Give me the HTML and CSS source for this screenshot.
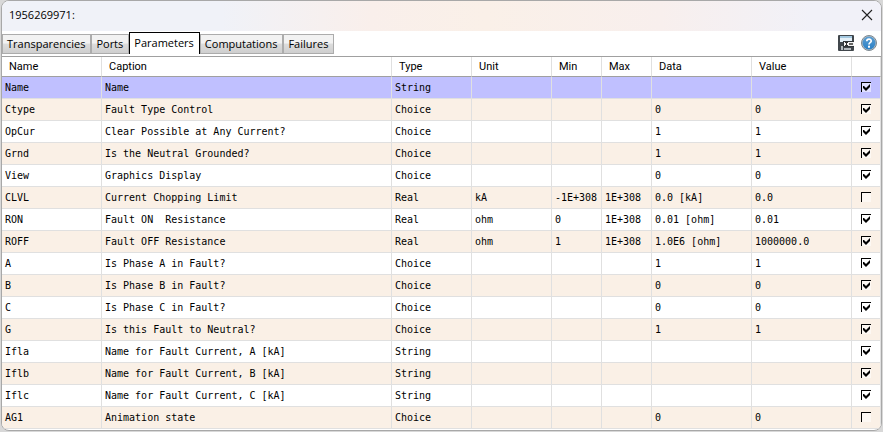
FILE: index.html
```html
<!DOCTYPE html>
<html lang="en">
<head>
<meta charset="utf-8">
<title>1956269971:</title>
<link rel="stylesheet" href="styles.css">
</head>
<body>
<main class="window">
  <header class="titlebar">
    <h1 class="title">1956269971:</h1>
    <button class="close" type="button" aria-label="Close">
      <svg width="12" height="12" viewBox="0 0 12 12"><path d="M1 1l10 10M11 1L1 11" stroke="#222" stroke-width="1.1" fill="none"/></svg>
    </button>
  </header>
  <nav class="toolbar">
    <div class="tabs" role="tablist">
      <button class="tab" type="button" role="tab">Transparencies</button>
      <button class="tab" type="button" role="tab">Ports</button>
      <button class="tab active" type="button" role="tab" aria-selected="true">Parameters</button>
      <button class="tab" type="button" role="tab">Computations</button>
      <button class="tab" type="button" role="tab">Failures</button>
    </div>
    <div class="tools">
      <button class="tool" type="button" aria-label="Save">
        <svg width="16" height="16" viewBox="0 0 16 16">
          <rect width="16" height="16" rx="1" fill="#41474c"/>
          <rect x="2" y="1" width="12" height="6" fill="#e4f0f8"/>
          <rect x="2" y="1" width="12" height="2" fill="#a3c8e0"/>
          <rect x="3" y="11" width="2" height="4" fill="#b4babe"/>
          <rect x="5" y="6" width="11" height="6" fill="#30363a"/>
          <rect x="6" y="7" width="10" height="4" fill="#f4f4f4"/>
          <path d="M7 7.500h3M8.500 8v2M7 10.500h3" stroke="#333" fill="none"/>
          <rect x="11" y="8" width="4" height="2" fill="#666"/>
          <rect x="6" y="13" width="7" height="2" fill="#b4babe"/>
        </svg>
      </button>
      <button class="tool" type="button" aria-label="Help">
        <svg width="16" height="16" viewBox="0 0 16 16">
          <defs><linearGradient id="g" x2="0" y2="1"><stop offset="0" stop-color="#5c9ed2"/><stop offset="1" stop-color="#2b80c6"/></linearGradient></defs>
          <circle cx="8" cy="8" r="7.500" fill="#b8c0c6" stroke="#7d8890"/>
          <circle cx="8" cy="8" r="6.500" fill="url(#g)"/>
          <path d="M5.800 6.300C5.800 3.400 10.300 3.500 10.200 6.200C10.100 7.700 8 7.700 8 9.500" stroke="#fff" stroke-width="1.700" fill="none"/>
          <rect x="7" y="10.700" width="2" height="2" fill="#fff"/>
        </svg>
      </button>
    </div>
  </nav>
  <table class="grid">
    <colgroup><col class="w100"><col><col class="w80"><col class="w80"><col class="w50"><col class="w50"><col class="w100"><col class="w100"><col class="w29"></colgroup>
    <thead><tr><th>Name</th><th>Caption</th><th>Type</th><th>Unit</th><th>Min</th><th>Max</th><th>Data</th><th>Value</th><th></th></tr></thead>
    <tbody>
      <tr class="selected"><td>Name</td><td>Name</td><td>String</td><td></td><td></td><td></td><td></td><td></td><td><input type="checkbox" aria-label="Name" checked></td></tr>
      <tr><td>Ctype</td><td>Fault Type Control</td><td>Choice</td><td></td><td></td><td></td><td>0</td><td>0</td><td><input type="checkbox" aria-label="Ctype" checked></td></tr>
      <tr><td>OpCur</td><td>Clear Possible at Any Current?</td><td>Choice</td><td></td><td></td><td></td><td>1</td><td>1</td><td><input type="checkbox" aria-label="OpCur" checked></td></tr>
      <tr><td>Grnd</td><td>Is the Neutral Grounded?</td><td>Choice</td><td></td><td></td><td></td><td>1</td><td>1</td><td><input type="checkbox" aria-label="Grnd" checked></td></tr>
      <tr><td>View</td><td>Graphics Display</td><td>Choice</td><td></td><td></td><td></td><td>0</td><td>0</td><td><input type="checkbox" aria-label="View" checked></td></tr>
      <tr><td>CLVL</td><td>Current Chopping Limit</td><td>Real</td><td>kA</td><td>-1E+308</td><td>1E+308</td><td>0.0 [kA]</td><td>0.0</td><td><input type="checkbox" aria-label="CLVL"></td></tr>
      <tr><td>RON</td><td>Fault ON  Resistance</td><td>Real</td><td>ohm</td><td>0</td><td>1E+308</td><td>0.01 [ohm]</td><td>0.01</td><td><input type="checkbox" aria-label="RON" checked></td></tr>
      <tr><td>ROFF</td><td>Fault OFF Resistance</td><td>Real</td><td>ohm</td><td>1</td><td>1E+308</td><td>1.0E6 [ohm]</td><td>1000000.0</td><td><input type="checkbox" aria-label="ROFF" checked></td></tr>
      <tr><td>A</td><td>Is Phase A in Fault?</td><td>Choice</td><td></td><td></td><td></td><td>1</td><td>1</td><td><input type="checkbox" aria-label="A" checked></td></tr>
      <tr><td>B</td><td>Is Phase B in Fault?</td><td>Choice</td><td></td><td></td><td></td><td>0</td><td>0</td><td><input type="checkbox" aria-label="B" checked></td></tr>
      <tr><td>C</td><td>Is Phase C in Fault?</td><td>Choice</td><td></td><td></td><td></td><td>0</td><td>0</td><td><input type="checkbox" aria-label="C" checked></td></tr>
      <tr><td>G</td><td>Is this Fault to Neutral?</td><td>Choice</td><td></td><td></td><td></td><td>1</td><td>1</td><td><input type="checkbox" aria-label="G" checked></td></tr>
      <tr><td>Ifla</td><td>Name for Fault Current, A [kA]</td><td>String</td><td></td><td></td><td></td><td></td><td></td><td><input type="checkbox" aria-label="Ifla" checked></td></tr>
      <tr><td>Iflb</td><td>Name for Fault Current, B [kA]</td><td>String</td><td></td><td></td><td></td><td></td><td></td><td><input type="checkbox" aria-label="Iflb" checked></td></tr>
      <tr><td>Iflc</td><td>Name for Fault Current, C [kA]</td><td>String</td><td></td><td></td><td></td><td></td><td></td><td><input type="checkbox" aria-label="Iflc" checked></td></tr>
      <tr><td>AG1</td><td>Animation state</td><td>Choice</td><td></td><td></td><td></td><td>0</td><td>0</td><td><input type="checkbox" aria-label="AG1"></td></tr>
    </tbody>
  </table>
</main>
</body>
</html>
```
FILE: styles.css
```css
* { box-sizing: border-box; }
body {
  margin: 0;
  padding: 0 1px;
  background: #d8d8d8;
  color: #000;
  font: 11px/16px "Open Sans", "Noto Sans", sans-serif;
}
button { font: inherit; color: inherit; border: 0; background: none; padding: 0; }
svg { display: block; }
.window {
  border: 1px solid #a8a8a8;
  border-radius: 8px;
  background: #fff;
  overflow: hidden;
  padding-bottom: 1px;
}
.titlebar {
  display: flex;
  align-items: center;
  justify-content: space-between;
  height: 30px;
  padding: 0 8px 2px 7px;
  background: linear-gradient(90deg, #f0f2f8 25%, #f9efeb 42%, #faf0e8 55%, #f8efed 75%, #f1f1f8 92%);
}
.title { margin: 0; font-size: 11px; font-weight: 400; }
.toolbar {
  display: flex;
  justify-content: space-between;
  align-items: flex-end;
  height: 25px;
  padding: 0 4px 2px 0;
}
.tabs { display: flex; align-items: flex-end; }
.tab {
  height: 20px;
  padding: 0 5px 0 4px;
  border: 1px solid #acacac;
  background: linear-gradient(#f2f2f2 0 45%, #dcdcdc 50%, #cfcfcf);
}
.tab.active { height: 22px; padding-bottom: 2px; border-color: #000; border-bottom: 0; background: #fff; }
.tools { display: flex; gap: 7px; align-items: center; padding-bottom: 3px; }
.grid {
  width: 100%;
  table-layout: fixed;
  border-collapse: separate;
  border-spacing: 0;
  border-top: 1px solid #a0a0a0;
}
.w100 { width: 100px; }
.w80 { width: 80px; }
.w50 { width: 50px; }
.w29 { width: 29px; }
th, td { border-right: 1px solid #e0e0e0; text-align: left; white-space: pre; }
th {
  height: 20px;
  padding: 0 0 0 7px;
  border-bottom: 1px solid #a0a0a0;
  font: 11px/16px Roboto, sans-serif;
}
td {
  height: 22px;
  padding: 0 0 0 3px;
  border-bottom: 1px solid #e0e0e0;
  font: 10px/16px "DejaVu Sans Mono", monospace;
}
tbody tr:nth-child(even) { background: #faf0e6; }
tbody tr.selected { background: #c0c0ff; }
td:last-child { padding: 0 0 1px; }
input {
  appearance: none;
  display: block;
  width: 10px;
  height: 10px;
  margin: 0 auto;
  border: solid #000;
  border-width: 1px 0 0 1px;
  background: #ffffff80;
}
input:checked::before {
  content: "";
  display: block;
  width: 9px;
  height: 9px;
  background: #000;
  clip-path: polygon(1px 3px, 2px 3px, 4px 5px, 8px 1px, 8px 4px, 4px 8px, 1px 5px);
}
```
